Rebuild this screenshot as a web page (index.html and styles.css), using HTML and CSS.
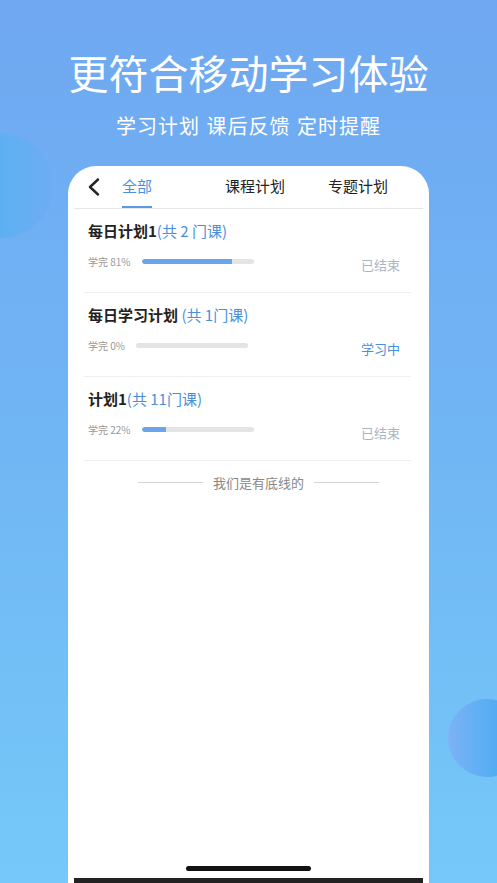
FILE: index.html
```html
<!DOCTYPE html>
<html lang="zh-CN">
<head>
<meta charset="utf-8">
<title>学习计划</title>
<link rel="stylesheet" href="styles.css">
</head>
<body>
<div class="page">
  <div class="bubble bubble-left"></div>
  <div class="bubble bubble-right"></div>
  <header class="hero">
    <h1 class="hero-title">更符合移动学习体验</h1>
    <p class="hero-sub">学习计划 课后反馈 定时提醒</p>
  </header>
  <section class="card">
    <nav class="tabs">
      <span class="back">
        <svg width="14" height="18" viewBox="0 0 14 18"><path d="M11 1.5 L3 9 L11 16.5" fill="none" stroke="#222" stroke-width="2.4" stroke-linecap="round" stroke-linejoin="round"/></svg>
      </span>
      <span class="tab tab-active">全部</span>
      <span class="tab tab-course">课程计划</span>
      <span class="tab tab-topic">专题计划</span>
    </nav>
    <ul class="plans">
      <li class="plan">
        <div class="plan-title"><b>每日计划1</b><span class="count">(共 2 门课)</span></div>
        <div class="plan-row">
          <span class="done">学完 81%</span>
          <span class="bar"><span class="fill" style="width:81%"></span></span>
          <span class="status">已结束</span>
        </div>
      </li>
      <li class="plan">
        <div class="plan-title"><b>每日学习计划</b> <span class="count">(共 1门课)</span></div>
        <div class="plan-row">
          <span class="done">学完 0%</span>
          <span class="bar"><span class="fill" style="width:0%"></span></span>
          <span class="status status-active">学习中</span>
        </div>
      </li>
      <li class="plan">
        <div class="plan-title"><b>计划1</b><span class="count">(共 11门课)</span></div>
        <div class="plan-row">
          <span class="done">学完 22%</span>
          <span class="bar"><span class="fill" style="width:22%"></span></span>
          <span class="status">已结束</span>
        </div>
      </li>
    </ul>
    <div class="end-line"><span class="rule"></span><span class="end-text">我们是有底线的</span><span class="rule"></span></div>
    <div class="home-indicator"></div>
    <div class="bottom-bar"></div>
  </section>
</div>
</body>
</html>
```

FILE: styles.css
```css
* { box-sizing: border-box; }
html, body {
  margin: 0;
  padding: 0;
}
body {
  width: 497px;
  height: 883px;
  overflow: hidden;
  font-family: "Noto Sans CJK SC", "Noto Sans", sans-serif;
}
.page {
  position: relative;
  width: 497px;
  height: 883px;
  overflow: hidden;
  background: linear-gradient(180deg, #6fa8f1 0%, #70b4f4 45%, #75c8f9 100%);
  display: flex;
  flex-direction: column;
}
.bubble {
  position: absolute;
  border-radius: 50%;
}
.bubble-left {
  width: 104px;
  height: 104px;
  left: -51px;
  top: 134px;
  background: linear-gradient(90deg, #45a7ef 0%, #5fb0f2 55%, #6facf2 100%);
}
.bubble-right {
  width: 78px;
  height: 78px;
  left: 448px;
  top: 699px;
  background: linear-gradient(90deg, #7db2f6 0%, #5aaef3 50%, #40a6ef 100%);
}
.hero {
  position: relative;
  text-align: center;
  color: #fff;
  padding-top: 44px;
}
.hero-title {
  margin: 0;
  font-size: 40px;
  line-height: 56px;
  font-weight: 400;
  letter-spacing: 0;
}
.hero-sub {
  margin: 12px 0 0;
  font-size: 20px;
  line-height: 28px;
  font-weight: 400;
  letter-spacing: 1px;
  word-spacing: 1px;
}
.card {
  position: relative;
  margin: 26px 0 0 68px;
  width: 361px;
  flex: 1;
  background: #fff;
  border-radius: 28px 28px 0 0;
  display: flex;
  flex-direction: column;
}
.tabs {
  height: 43px;
  margin: 0 6px;
  border-bottom: 1px solid #e6e6e6;
  display: flex;
  align-items: flex-start;
}
.back {
  height: 42px;
  display: flex;
  align-items: center;
  margin-left: 13px;
  width: 14px;
}
.tab {
  height: 42px;
  line-height: 40px;
  font-size: 15px;
  color: #222;
  border-bottom: 2px solid transparent;
}
.tab-active {
  margin-left: 21px;
  color: #4a8fdd;
  border-bottom-color: #5a9ae4;
}
.tab-course { margin-left: 73px; }
.tab-topic { margin-left: 43px; }
.plans {
  list-style: none;
  margin: 0 18px 0 16px;
  padding: 0;
}
.plan {
  padding: 12px 11px 19px 4px;
  border-bottom: 1px solid #efefef;
}
.plan-title {
  font-size: 15px;
  line-height: 20px;
  color: #222;
}
.plan-title b { font-weight: 700; }
.count {
  color: #4a8fdd;
  font-weight: 400;
}
.plan-row {
  margin-top: 12px;
  height: 20px;
  display: flex;
  align-items: center;
}
.done {
  font-size: 10px;
  color: #999;
  line-height: 14px;
  margin-top: -3px;
}
.bar {
  margin-left: 11px;
  margin-top: -4px;
  width: 112px;
  height: 5px;
  border-radius: 3px;
  background: #e4e4e4;
  overflow: hidden;
  display: block;
}
.fill {
  display: block;
  height: 100%;
  background: #6aa5ec;
  border-radius: 3px 0 0 3px;
}
.status {
  margin-left: auto;
  font-size: 13px;
  color: #a9b4c4;
  margin-top: 2px;
}
.status-active { color: #4a8fdd; }
.end-line {
  margin-top: 11px;
  padding-left: 20px;
  height: 20px;
  display: flex;
  align-items: center;
  justify-content: center;
}
.rule {
  width: 65px;
  height: 1px;
  background: #d4d4d4;
}
.end-text {
  margin: 0 10px;
  font-size: 13px;
  color: #888;
}
.home-indicator {
  margin: auto auto 7px;
  width: 125px;
  height: 5px;
  border-radius: 3px;
  background: #111;
}
.bottom-bar {
  margin: 0 6px;
  height: 5px;
  background: #222;
}
```
